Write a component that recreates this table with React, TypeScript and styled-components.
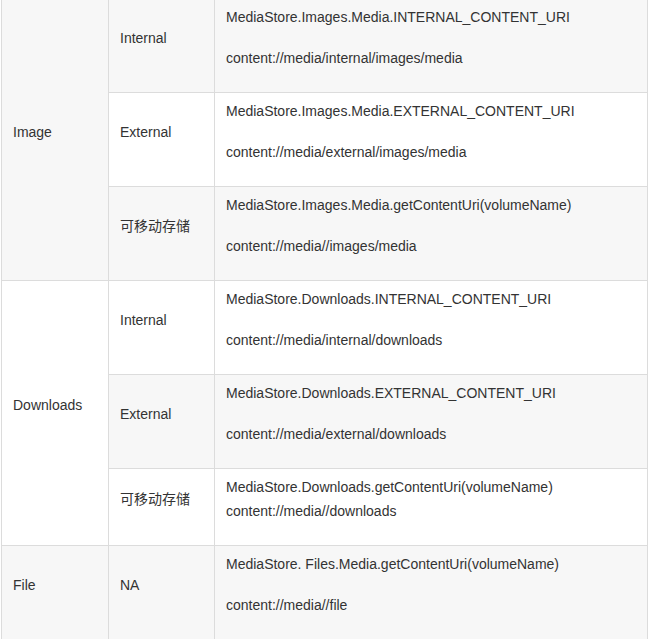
import React from "react";
import styled, { createGlobalStyle } from "styled-components";

const GlobalStyle = createGlobalStyle`
  html, body {
    margin: 0;
    padding: 0;
    background: #fff;
    overflow: hidden;
  }
`;

const Page = styled.div`
  width: 650px;
  height: 639px;
  overflow: hidden;
  padding-left: 1px;
  box-sizing: border-box;
`;

const Table = styled.table`
  margin-top: -2px;
  width: 647px;
  table-layout: fixed;
  border-collapse: collapse;
  font-family: "Liberation Sans", Arial, "Noto Sans CJK SC", sans-serif;
  font-size: 14px;
  line-height: 24px;
  color: #333;

  tr:nth-child(odd) {
    background: #f7f7f7;
  }
  tr:nth-child(even) {
    background: #fff;
  }
`;

const Cell = styled.td`
  border: 1px solid #dcdcdc;
  padding: 6px 11px;
  vertical-align: middle;
  text-align: left;
`;

// paragraphs inside a cell; the last one keeps a 16px bottom margin
const Para = styled.p`
  margin: 0 0 17px;
  white-space: nowrap;

  &:last-child {
    margin-bottom: 16px;
  }
`;

type Row = {
  group?: string;
  span?: number;
  volume: string;
  api: string;
  uri: string;
  tight?: boolean;
};

const rows: Row[] = [
  {
    group: "Image",
    span: 3,
    volume: "Internal",
    api: "MediaStore.Images.Media.INTERNAL_CONTENT_URI",
    uri: "content://media/internal/images/media",
  },
  {
    volume: "External",
    api: "MediaStore.Images.Media.EXTERNAL_CONTENT_URI",
    uri: "content://media/external/images/media",
  },
  {
    volume: "可移动存储",
    api: "MediaStore.Images.Media.getContentUri(volumeName)",
    uri: "content://media//images/media",
  },
  {
    group: "Downloads",
    span: 3,
    volume: "Internal",
    api: "MediaStore.Downloads.INTERNAL_CONTENT_URI",
    uri: "content://media/internal/downloads",
  },
  {
    volume: "External",
    api: "MediaStore.Downloads.EXTERNAL_CONTENT_URI",
    uri: "content://media/external/downloads",
  },
  {
    volume: "可移动存储",
    api: "MediaStore.Downloads.getContentUri(volumeName)",
    uri: "content://media//downloads",
    tight: true,
  },
  {
    group: "File",
    span: 1,
    volume: "NA",
    api: "MediaStore. Files.Media.getContentUri(volumeName)",
    uri: "content://media//file",
  },
];

const App = () => {
  return (
    <Page>
      <GlobalStyle />
      <Table>
        <colgroup>
          <col style={{ width: 107 }} />
          <col style={{ width: 106 }} />
          <col />
        </colgroup>
        <tbody>
          {rows.map((r, i) => (
            <tr key={i}>
              {r.group && (
                <Cell rowSpan={r.span}>
                  <Para>{r.group}</Para>
                </Cell>
              )}
              <Cell>
                <Para>{r.volume}</Para>
              </Cell>
              <Cell>
                {r.tight ? (
                  <Para>
                    {r.api}
                    <br />
                    {r.uri}
                  </Para>
                ) : (
                  <>
                    <Para>{r.api}</Para>
                    <Para>{r.uri}</Para>
                  </>
                )}
              </Cell>
            </tr>
          ))}
        </tbody>
      </Table>
    </Page>
  );
};

export default App;
